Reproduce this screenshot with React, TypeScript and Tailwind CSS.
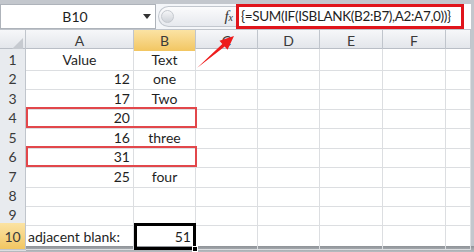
import React from "react";

const cols = ["A", "B", "C", "D", "E", "F", ""];

type Row = { n: number; a?: string; b?: string; h: string; label?: boolean };

const rows: Row[] = [
  { n: 1, a: "Value", b: "Text", h: "h-[19px]", label: true },
  { n: 2, a: "12", b: "one", h: "h-[20px]" },
  { n: 3, a: "17", b: "Two", h: "h-[19px]" },
  { n: 4, a: "20", h: "h-[20px]" },
  { n: 5, a: "16", b: "three", h: "h-[19px]" },
  { n: 6, a: "31", h: "h-[20px]" },
  { n: 7, a: "25", b: "four", h: "h-[19px]" },
  { n: 8, h: "h-[19px]" },
  { n: 9, h: "h-[19px]" },
];

const gridCols = "grid grid-cols-[26px_108px_62px_62px_62px_63px_63px_25px]";

export default function App() {
  return (
    <div className="w-[474px] h-[252px] bg-[#c3c7cd] overflow-hidden font-['Lato',sans-serif] text-[#1f1f1f]">
      {/* Formula bar */}
      <div className="mt-[4px] h-[26px] flex bg-[#f4f6f9] border-b border-[#bfc4cb] mr-[3px]">
        <div className="w-[156px] bg-white border border-[#aeb3ba] flex items-center">
          <span className="flex-1 text-center text-[14px] pl-[6px]">B10</span>
          <svg width="8" height="5" viewBox="0 0 8 5" className="mr-[4px]">
            <path d="M0 0h8L4 5z" fill="#333" />
          </svg>
        </div>
        <div className="w-[80px] flex items-center pl-[2px]">
          <div className="h-[21px] flex-1 rounded-l-full border border-[#c2c7ce] border-r-0 bg-gradient-to-b from-[#fbfbfc] to-[#e6e9ee] flex items-center justify-between pl-[2px] pr-[3px]">
            <div className="w-[13px] h-[13px] rounded-full bg-gradient-to-b from-[#f4f5f7] to-[#cfd3d9] border border-[#c5c9cf]" />
            <span className="font-['Liberation_Serif',serif] italic text-[15px] text-[#333] leading-none">
              f<span className="text-[10px]">x</span>
            </span>
          </div>
        </div>
        <div className="flex-1 bg-white flex items-center">
          <div className="w-[228px] h-[25px] border-[3px] border-[#e0141b] flex items-center pl-[2px] text-[13.5px] tracking-[-0.35px] whitespace-nowrap">
            {"{=SUM(IF(ISBLANK(B2:B7),A2:A7,0))}"}
          </div>
        </div>
      </div>

      {/* Sheet */}
      <div className="relative w-[471px] bg-white">
        {/* Column headers */}
        <div className={`${gridCols} h-[19px] bg-gradient-to-b from-[#f6f7f9] to-[#e3e6eb] border-b border-[#b9bec6]`}>
          <div className="border-r border-[#c0c5cc] flex items-end justify-end p-[2px]">
            <svg width="11" height="11" viewBox="0 0 11 11">
              <path d="M11 0v11H0z" fill="#c6cad0" />
            </svg>
          </div>
          {cols.map((c, i) => (
            <div
              key={i}
              className={`border-r border-[#c0c5cc] flex items-center justify-center text-[14px] text-[#3a3a3a] ${
                c === "B" ? "bg-gradient-to-b from-[#fbe3a3] to-[#f2c661]" : ""
              }`}
            >
              {c}
            </div>
          ))}
        </div>

        {rows.map((r) => (
          <div key={r.n} className={`${gridCols} ${r.h}`}>
            <div className="bg-[#e8ebef] border-r border-b border-[#c0c5cc] flex items-center justify-center text-[14px] text-[#3a3a3a]">
              {r.n}
            </div>
            <div
              className={`border-r border-b border-[#dcdee1] flex items-center text-[14px] px-[3px] ${
                r.label ? "justify-center" : "justify-end"
              }`}
            >
              {r.a}
            </div>
            <div className="border-r border-b border-[#dcdee1] flex items-center justify-center text-[14px]">
              {r.b}
            </div>
            {[0, 1, 2, 3, 4, 5].map((k) => (
              <div key={k} className="border-r border-b border-[#dcdee1]" />
            ))}
          </div>
        ))}

        {/* Row 10 */}
        <div className={`${gridCols} h-[20px]`}>
          <div className="bg-gradient-to-b from-[#fbe3a3] to-[#f2c661] border-r border-b border-[#c0c5cc] flex items-center justify-center text-[14px] text-[#3a3a3a]">
            10
          </div>
          <div className="border-r border-b border-[#dcdee1] flex items-center text-[14px] px-[2px] whitespace-nowrap">
            adjacent blank:
          </div>
          <div className="relative border-[3px] border-black flex items-center justify-end text-[14px] pr-[2px]">
            51
            <div className="absolute right-[-5px] bottom-[-5px] w-[6px] h-[6px] bg-black border border-white" />
          </div>
          {[0, 1, 2, 3, 4, 5].map((k) => (
            <div key={k} className="border-r border-b border-[#dcdee1]" />
          ))}
        </div>
        <div className="h-[3px] bg-white" />

        {/* Highlights */}
        <div className="absolute left-[26px] top-[77px] w-[171px] h-[21px] border-2 border-[#e2474b]" />
        <div className="absolute left-[26px] top-[116px] w-[171px] h-[21px] border-2 border-[#e2474b]" />

        {/* Arrow */}
        <svg className="absolute left-0 top-[-30px]" width="474" height="100" viewBox="0 0 474 100">
          <polygon points="197,68 222.3,43.9 219.5,40.8 234,36 227.5,49.8 224.7,46.6" fill="#ee1c1c" />
        </svg>
      </div>
      <div className="h-[6px] bg-gradient-to-b from-[#8e9297] to-[#b8bcc1]" />
    </div>
  );
}
